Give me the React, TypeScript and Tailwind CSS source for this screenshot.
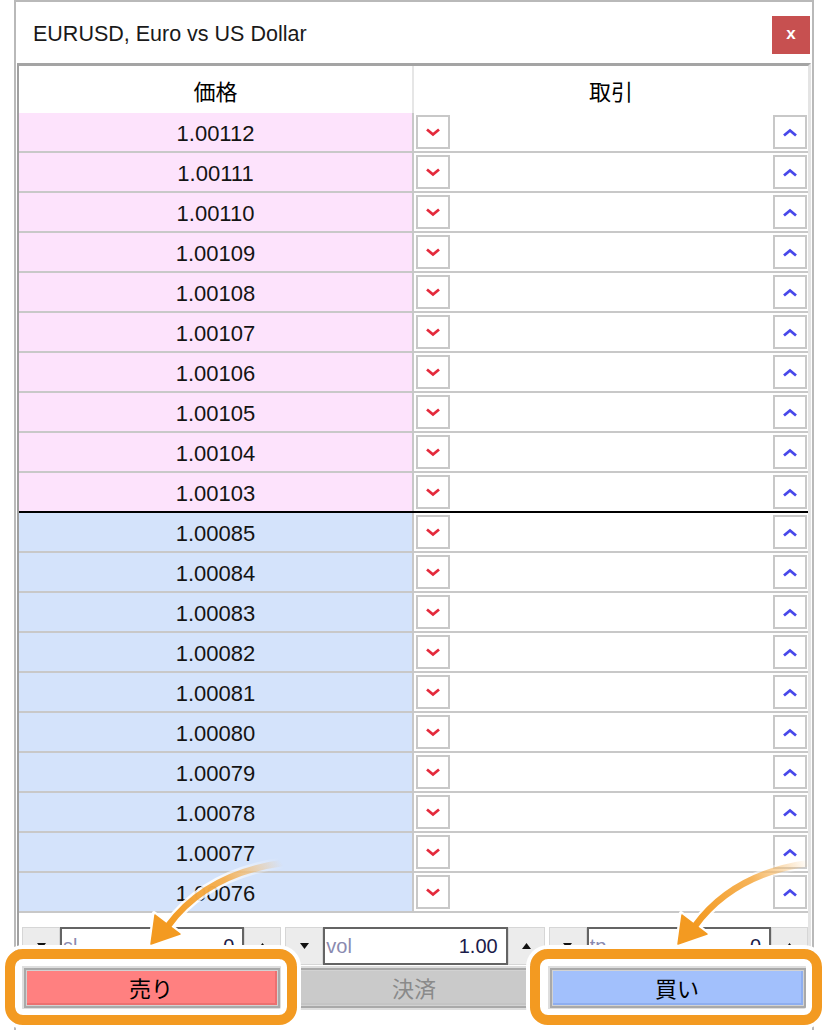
import React from "react";

const sellPrices = ["1.00112", "1.00111", "1.00110", "1.00109", "1.00108", "1.00107", "1.00106", "1.00105", "1.00104", "1.00103"];
const buyPrices = ["1.00085", "1.00084", "1.00083", "1.00082", "1.00081", "1.00080", "1.00079", "1.00078", "1.00077", "1.00076"];

const sans = "font-['Liberation_Sans','Noto_Sans_CJK_JP',sans-serif]";
const jp = "font-['Noto_Sans_CJK_JP',sans-serif]";

function Chevron({ up }: { up?: boolean }) {
  return (
    <svg width="14" height="9" viewBox="0 0 14 9">
      <polyline
        points={up ? "1,7.5 7,2.5 13,7.5" : "1,1.5 7,6.5 13,1.5"}
        fill="none"
        stroke={up ? "#4747ea" : "#e42a3c"}
        strokeWidth="2.8"
      />
    </svg>
  );
}

function Tri({ up }: { up?: boolean }) {
  return (
    <svg width="9" height="6" viewBox="0 0 9 6">
      <polygon points={up ? "0,6 4.5,0 9,6" : "0,0 9,0 4.5,6"} fill="#111" />
    </svg>
  );
}

function PriceRow({ price, tone, divider }: { price: string; tone: "sell" | "buy"; divider?: boolean }) {
  return (
    <div className={`grid h-[40px] grid-cols-[393px_1fr] border-b-2 ${divider ? "border-black" : "border-[#c8c8c8]"}`}>
      <div className={`flex items-center justify-center pt-[2px] text-[22px] text-[#141414] ${tone === "sell" ? "bg-[#fde3fc]" : "bg-[#d4e3fb]"}`}>
        {price}
      </div>
      <div className="flex items-center justify-between border-l-2 border-[#c8c8c8] bg-white pl-[2px] pr-[1px]">
        <div className="flex h-[34px] w-[34px] items-center justify-center border-2 border-[#c8c8c8] bg-white">
          <Chevron />
        </div>
        <div className="flex h-[34px] w-[34px] items-center justify-center border-2 border-[#c8c8c8] bg-white">
          <Chevron up />
        </div>
      </div>
    </div>
  );
}

function Spinner({ label, value }: { label: string; value: string }) {
  return (
    <div className="flex h-[38px]">
      <div className="flex w-[38px] items-center justify-center border border-[#d6d6d6] bg-[#ececec]">
        <Tri />
      </div>
      <div className="flex flex-1 items-center justify-between border-2 border-[#646464] bg-white pl-[1px] pr-[8px] text-[20px]">
        <span className="text-[#8a8ab0]">{label}</span>
        <span className="text-[#1b1b4a]">{value}</span>
      </div>
      <div className="flex w-[37px] items-center justify-center border border-[#d6d6d6] bg-[#ececec]">
        <Tri up />
      </div>
    </div>
  );
}

function OrderButton({ label, face, edge, text }: { label: string; face: string; edge: string; text: string }) {
  return (
    <div className="h-[44px] border-2 border-[#dedede]">
      <div className="h-full border-2 border-[#a9a9a9] bg-[#d2d2d2] p-px">
        <div className={`flex h-full items-center justify-center border-b-2 border-r-2 text-[22px] ${jp} ${face} ${edge} ${text}`}>
          {label}
        </div>
      </div>
    </div>
  );
}

function CurvedArrow({ dx, id }: { dx: number; id: string }) {
  return (
    <g transform={`translate(${dx} 0)`}>
      <defs>
        <linearGradient id={id} gradientUnits="userSpaceOnUse" x1="282" y1="863" x2="168" y2="926">
          <stop offset="0" stopColor="#f39a21" stopOpacity="0" />
          <stop offset="0.45" stopColor="#f39a21" stopOpacity="0.75" />
          <stop offset="1" stopColor="#f39a21" stopOpacity="1" />
        </linearGradient>
        <linearGradient id={`${id}w`} gradientUnits="userSpaceOnUse" x1="282" y1="863" x2="168" y2="926">
          <stop offset="0" stopColor="#ffffff" stopOpacity="0" />
          <stop offset="0.5" stopColor="#ffffff" stopOpacity="0.8" />
          <stop offset="1" stopColor="#ffffff" stopOpacity="1" />
        </linearGradient>
      </defs>
      <path d="M 282 863 Q 206 874 168 926" fill="none" stroke={`url(#${id}w)`} strokeWidth="11" strokeLinecap="round" />
      <polygon points="150,946 154,913 183,935" fill="#ffffff" stroke="#ffffff" strokeWidth="4" strokeLinejoin="round" />
      <path d="M 282 863 Q 206 874 168 926" fill="none" stroke={`url(#${id})`} strokeWidth="6.5" strokeLinecap="round" />
      <polygon points="151,944 155,915 180,934" fill="#f39a21" stroke="#f39a21" strokeWidth="1.5" strokeLinejoin="round" />
    </g>
  );
}

export default function App() {
  return (
    <div className={`relative h-[1030px] w-[830px] overflow-hidden bg-white ${sans}`}>
      <div className="ml-[14px] h-[1040px] w-[800px] border-x-2 border-t-2 border-[#b9b9b9]">
        {/* Title bar */}
        <div className="flex h-[61px] items-start justify-between pl-[17px] pr-[2px]">
          <span className="mt-[16px] text-[21.5px] text-[#1a1a1a]">EURUSD, Euro vs US Dollar</span>
          <div className="mt-[14px] flex h-[38px] w-[38px] items-center justify-center bg-[#c75050] pb-[3px] text-[17px] font-bold text-white">
            x
          </div>
        </div>

        {/* Depth of market frame */}
        <div className="mx-px border-l-2 border-r-[3px] border-t-[3px] border-l-[#a0a0a0] border-r-[#e4e4e4] border-t-[#a4a4a4]">
          <div className={`grid h-[47px] grid-cols-[393px_1fr] bg-white text-[22px] text-black ${jp}`}>
            <div className="flex items-center justify-center pt-[2px]">価格</div>
            <div className="flex items-center justify-center border-l-2 border-[#e6e6e6] pt-[2px]">取引</div>
          </div>

          {sellPrices.map((p, i) => (
            <PriceRow key={p} price={p} tone="sell" divider={i === sellPrices.length - 1} />
          ))}
          {buyPrices.map((p) => (
            <PriceRow key={p} price={p} tone="buy" />
          ))}

          {/* sl / vol / tp */}
          <div className="grid grid-cols-3 gap-[4px] pl-[3px] pt-[14px]">
            <Spinner label="sl" value="0" />
            <Spinner label="vol" value="1.00" />
            <Spinner label="tp" value="0" />
          </div>

          {/* order buttons */}
          <div className="mt-px grid grid-cols-3 gap-[3px] pl-[3px]">
            <OrderButton label="売り" face="bg-[#ff8080]" edge="border-[#ec7070]" text="text-black" />
            <OrderButton label="決済" face="bg-[#cacaca]" edge="border-[#c4c4c4]" text="text-[#8a8a8a]" />
            <OrderButton label="買い" face="bg-[#a2c0fc]" edge="border-[#8eaef0]" text="text-black" />
          </div>
        </div>
      </div>

      {/* highlights */}
      <div className="pointer-events-none absolute left-[5px] top-[949px] h-[76px] w-[292px] rounded-[18px] border-[10px] border-[#f39a21] shadow-[0_0_0_4px_#ffffff,inset_0_0_0_6px_#ffffff]" />
      <div className="pointer-events-none absolute left-[530px] top-[949px] h-[76px] w-[292px] rounded-[18px] border-[10px] border-[#f39a21] shadow-[0_0_0_4px_#ffffff,inset_0_0_0_6px_#ffffff]" />

      <svg className="pointer-events-none absolute left-0 top-0" width="830" height="1030" viewBox="0 0 830 1030">
        <CurvedArrow dx={0} id="arrowA" />
        <CurvedArrow dx={527} id="arrowB" />
      </svg>
    </div>
  );
}
